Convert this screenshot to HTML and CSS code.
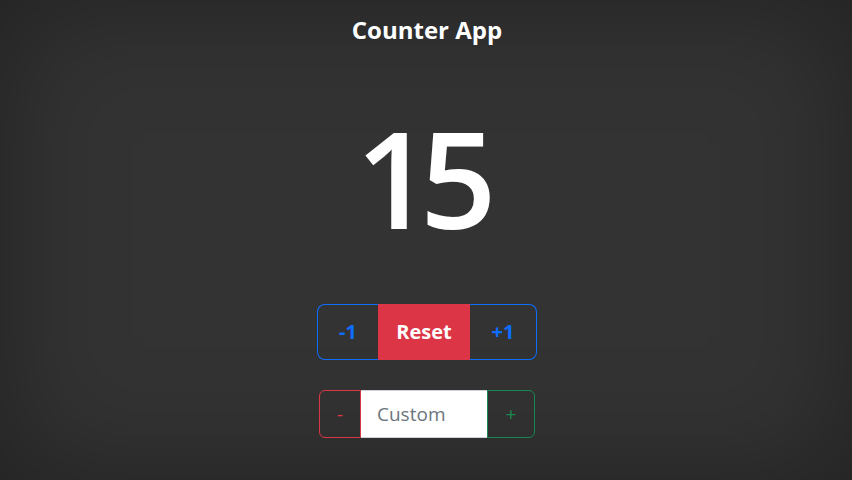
FILE: index.html
```html
<!DOCTYPE html>
<html lang="en">
<head>
<meta charset="utf-8">
<title>Counter App</title>
<link rel="stylesheet" href="styles.css">
</head>
<body>
<main class="app">
  <h1 class="title">Counter App</h1>
  <div class="count">15</div>
  <div class="btn-group">
    <button class="btn btn-step btn-dec">-1</button>
    <button class="btn btn-reset">Reset</button>
    <button class="btn btn-step btn-inc">+1</button>
  </div>
  <div class="input-group">
    <button class="ig-btn ig-minus">-</button>
    <input class="ig-input" type="text" placeholder="Custom">
    <button class="ig-btn ig-plus">+</button>
  </div>
</main>
</body>
</html>
```
FILE: styles.css
```css
* { box-sizing: border-box; }
html, body { margin: 0; height: 100%; }
body {
  background: #333333;
  font-family: "Open Sans", "Noto Sans", sans-serif;
  color: #fff;
}
.app {
  min-height: 100vh;
  display: flex;
  flex-direction: column;
  align-items: center;
  padding-left: 2px;
  box-shadow: inset 0 0 120px rgba(0, 0, 0, 0.35);
}
.title {
  margin: 16px 0 0;
  font-size: 24px;
  line-height: 28px;
  font-weight: 700;
  letter-spacing: 0;
}
.count {
  margin-top: 66px;
  margin-right: 14px;
  font-size: 134px;
  line-height: 134px;
  font-weight: 600;
  letter-spacing: -12px;
}
.btn-group {
  margin-top: 60px;
  display: flex;
  height: 56px;
}
.btn {
  font-family: inherit;
  font-size: 20px;
  font-weight: 700;
  line-height: 30px;
  padding: 0;
  cursor: pointer;
  display: flex;
  align-items: center;
  justify-content: center;
}
.btn-step {
  background: transparent;
  color: #0d6efd;
  border: 1px solid #0d6efd;
}
.btn-dec {
  width: 61px;
  border-radius: 8px 0 0 8px;
  border-right: none;
}
.btn-inc {
  width: 67px;
  border-radius: 0 8px 8px 0;
  border-left: none;
}
.btn-reset {
  width: 92px;
  background: #dc3545;
  color: #fff;
  border: 1px solid #dc3545;
  border-radius: 0;
}
.input-group {
  margin-top: 30px;
  display: flex;
  height: 48px;
}
.ig-btn {
  font-family: inherit;
  font-size: 19px;
  background: transparent;
  padding: 0;
  display: flex;
  align-items: center;
  justify-content: center;
  cursor: pointer;
}
.ig-minus {
  width: 42px;
  color: #dc3545;
  border: 1px solid #dc3545;
  border-radius: 6px 0 0 6px;
}
.ig-plus {
  width: 48px;
  color: #198754;
  border: 1px solid #198754;
  border-radius: 0 6px 6px 0;
}
.ig-input {
  width: 126px;
  font-family: inherit;
  font-size: 19px;
  padding: 0 16px;
  border: 1px solid #ced4da;
  border-left: none;
  border-right: none;
  background: #fff;
  color: #212529;
  outline: none;
}
.ig-input::placeholder { color: #6c757d; }
```
